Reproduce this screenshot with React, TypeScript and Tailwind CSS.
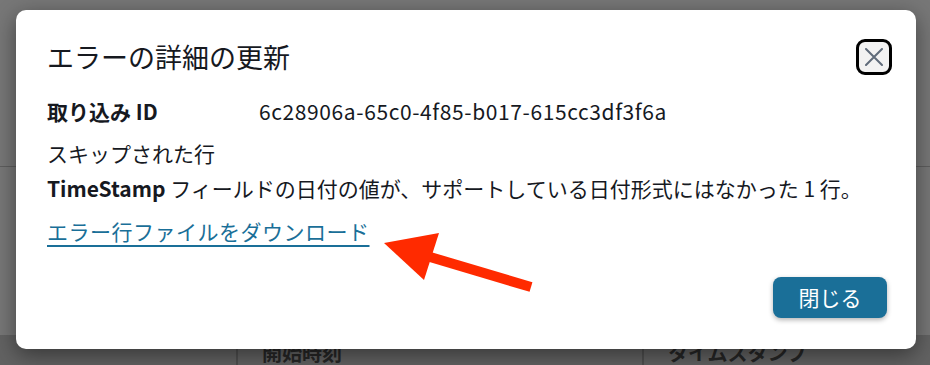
import React from "react";

export default function App() {
  const font = { fontFamily: '"Noto Sans CJK JP", "Noto Sans", sans-serif' };
  return (
    <div
      className="relative w-[930px] h-[365px] overflow-hidden bg-[#777777]"
      style={font}
    >
      {/* background page */}
      <div className="flex flex-col h-full">
        <div className="h-[166px]" />
        <div className="h-px bg-[#5e5e5e]" />
        <div className="flex-1" />
        <div className="h-[30px] bg-[#626262] flex items-start pt-[6px] text-[20px] leading-[24px] font-bold text-[#262626]">
          <div className="w-[236px]" />
          <div className="w-[2px] h-[26px] bg-[#4f4f4f]" />
          <div className="w-[404px] pl-[24px]">開始時刻</div>
          <div className="w-[2px] h-[26px] bg-[#4f4f4f]" />
          <div className="pl-[24px]">タイムスタンプ</div>
        </div>
      </div>

      {/* dialog */}
      <div className="absolute left-[16px] top-[10px] w-[900px] h-[339px] rounded-[10px] bg-white shadow-[0_6px_22px_rgba(0,0,0,0.45)] flex flex-col pl-[31px] pr-[24px] pt-[28px] text-[#16191f]">
        <div className="flex items-center justify-between h-[38px]">
          <h2 className="text-[27px] leading-[36px] font-normal">エラーの詳細の更新</h2>
          <button className="w-[36px] h-[36px] rounded-[9px] border-[3px] border-black bg-[#f2f2f2] flex items-center justify-center">
            <svg width="18" height="18" viewBox="0 0 18 18">
              <path d="M1 1 L17 17 M17 1 L1 17" stroke="#5f6b7a" strokeWidth="2" strokeLinecap="round" />
            </svg>
          </button>
        </div>

        <div className="mt-[20px] grid grid-cols-[212px_1fr] text-[21px] leading-[30px]">
          <div className="font-bold">取り込み ID</div>
          <div className="tracking-[0.6px]">6c28906a-65c0-4f85-b017-615cc3df3f6a</div>
        </div>

        <div className="mt-[12px] text-[21px] leading-[30px]">スキップされた行</div>
        <div className="mt-[5px] text-[21px] leading-[30px]">
          <span className="font-bold">TimeStamp</span> フィールドの日付の値が、サポートしている日付形式にはなかった 1 行。
        </div>

        <div className="mt-[13px] text-[21px] leading-[30px]">
          <a className="text-[#1a6f98] underline decoration-[2px] underline-offset-[5px] tracking-[0.5px]">エラー行ファイルをダウンロード</a>
        </div>

        <div className="mt-[31px] flex justify-end pr-[5px]">
          <button className="w-[114px] h-[41px] rounded-[8px] bg-[#1a6f98] text-white text-[21px] leading-[41px] shadow-[0_2px_5px_rgba(0,0,0,0.3)]">
            閉じる
          </button>
        </div>
      </div>

      {/* annotation arrow */}
      <svg className="absolute left-0 top-0" width="930" height="365" viewBox="0 0 930 365">
        <line x1="420" y1="254" x2="531" y2="287" stroke="#ff2a00" strokeWidth="10" />
        <polygon points="384,243 439,233 424,280" fill="#ff2a00" />
      </svg>
    </div>
  );
}
